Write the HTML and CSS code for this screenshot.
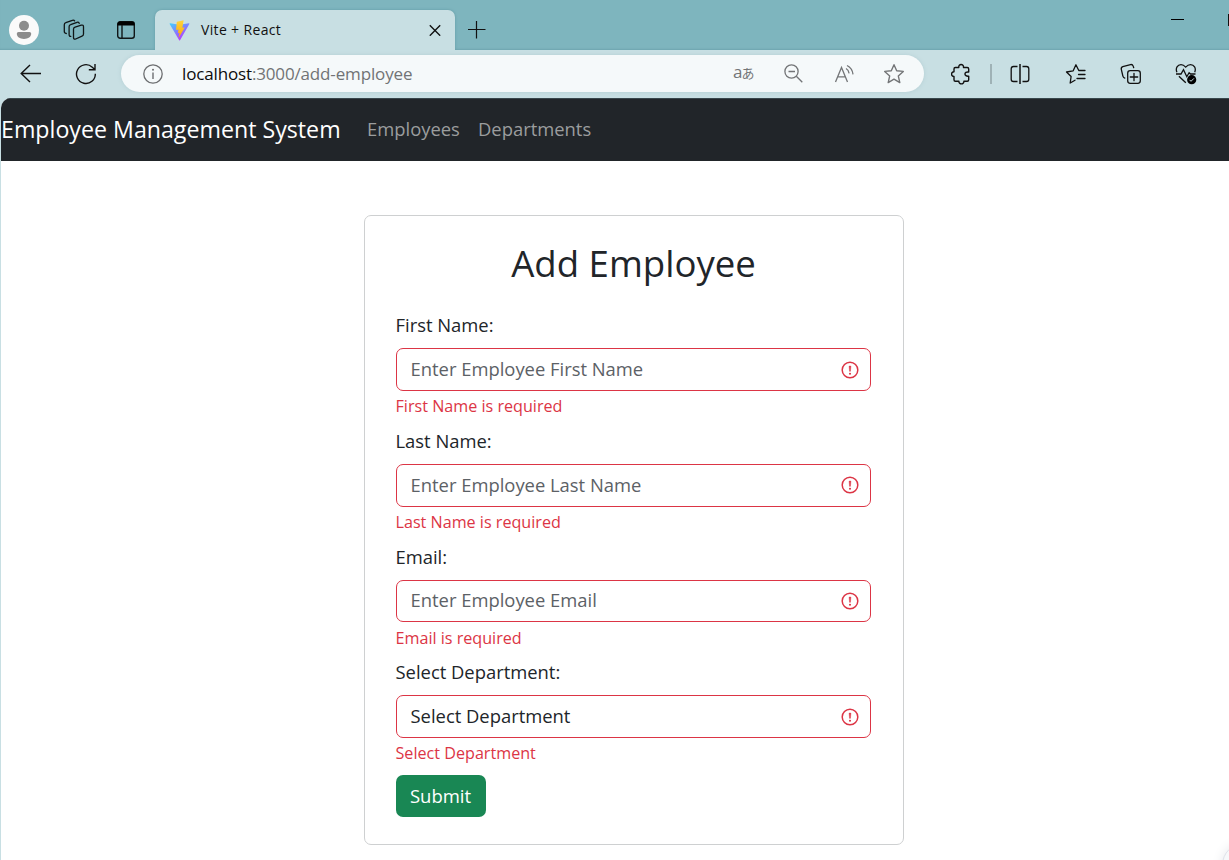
FILE: index.html
```html
<!DOCTYPE html>
<html lang="en">
<head>
<meta charset="utf-8">
<title>Vite + React</title>
<link rel="stylesheet" href="styles.css">
</head>
<body>
<div class="tabs">
  <div class="avatar"><svg width="30" height="30" viewBox="0 0 30 30"><circle cx="15" cy="15" r="15" fill="#fafafa"/><circle cx="15" cy="10.800" r="5" fill="#8c8c8c"/><path d="M9.500 17h11q1.700 0 1.700 1.600c0 3.500-3 5.400-7.200 5.400s-7.200-1.900-7.200-5.400q0-1.600 1.700-1.600z" fill="#8c8c8c"/></svg></div>
  <svg class="workspaces" width="24" height="24" viewBox="0 0 24 24"><g fill="none" stroke="#101617" stroke-width="1.300" stroke-linejoin="round" stroke-linecap="round"><path d="M10.500 11q.2-1.500 1.600-1.900l6.200-1.900q2.200-.5 2.200 1.500v7.300q0 1.500-1.500 2.100l-6.300 2.900q-2.200.7-2.200-1.500z"/><path d="M7.800 18.300q-1.700.2-1.700-1.700V8.700q0-1.500 1.500-2l6.400-2.400q1.500-.4 2.200 1"/><path d="M3.300 15.500q-2-.1-2-1.900V6.700q0-1.500 1.500-2l6.600-2.400q1.600-.4 2.200.6"/></g></svg>
  <svg class="tabmenu" width="20" height="20" viewBox="0 0 20 20"><rect x="1.700" y="1.700" width="16.600" height="16.600" rx="2.500" fill="none" stroke="#101617" stroke-width="1.400"/><path d="M1.500 5.500V4q0-2.500 2.500-2.500h12q2.500 0 2.500 2.500v1.500z" fill="#000"/><path d="M6 5v13" stroke="#101617" stroke-width="1.400"/></svg>
  <div class="tab">
    <svg width="21" height="21" viewBox="0 0 32 32"><defs><linearGradient id="va" x1="0" y1="0" x2=".6" y2="1"><stop offset="0" stop-color="#41d1ff"/><stop offset="1" stop-color="#bd34fe"/></linearGradient><linearGradient id="vb" x1="0" y1="0" x2="0" y2="1"><stop offset="0" stop-color="#ffd33d"/><stop offset="1" stop-color="#ffa800"/></linearGradient></defs><path d="M31 6.100 16.800 30.800a.8.800 0 0 1-1.300 0L1 6.100a.8.800 0 0 1 .8-1.200L16 7.400l14.200-2.500A.8.800 0 0 1 31 6.100z" fill="url(#va)"/><path d="m22.300.5-10.200 2a.4.400 0 0 0-.3.400l-1 12.300 3.700-.8-.9 5.500 2.600-.6-1.800 8.200 9.700-16.200-3.700.6z" fill="url(#vb)"/></svg>
    <span class="tab-title">Vite + React</span>
    <svg width="12" height="12" viewBox="0 0 12 12"><path d="m.8 1.300 10.400 10.400M11.200 1.300.8 11.700" stroke="#111" stroke-width="1.400"/></svg>
  </div>
  <svg class="newtab" width="18" height="18" viewBox="0 0 18 18"><path d="M0 8.500h17.500M8.500 0v17.500" stroke="#111" stroke-width="1.200"/></svg>
  <div class="minimize"></div>
  <div class="maximize"></div>
</div>
<div class="toolbar">
  <svg class="back" width="22" height="20" viewBox="0 0 22 20"><path d="M21 9.500H1.500M10 1 1.200 9.500 10 18" fill="none" stroke="#111" stroke-width="1.400"/></svg>
  <svg class="reload" width="22" height="22" viewBox="0 0 22 22"><path d="M20.300 10.700A9.400 9.400 0 1 1 17.300 4.200l2.200 2M20 1v5.700h-6.200" fill="none" stroke="#111" stroke-width="1.400"/></svg>
  <div class="address">
    <svg class="info" width="20" height="20" viewBox="0 0 20 20"><circle cx="10" cy="10" r="9.200" fill="none" stroke="#6c6e70" stroke-width="1.300"/><path d="M10 8.500v6.500" stroke="#6c6e70" stroke-width="1.400"/><circle cx="10" cy="5.800" r="1" fill="#6c6e70"/></svg>
    <div class="url"><span class="host">localhost</span>:3000/add-employee</div>
    <span class="translate">a<span class="kana">あ</span></span>
    <svg class="zoomout" width="20" height="20" viewBox="0 0 20 20" fill="none" stroke="#737577" stroke-width="1.300"><circle cx="7.500" cy="7.500" r="6.600"/><path d="M4.500 7.500h6.500M12.300 12.300l6 6"/></svg>
    <svg class="read" width="22" height="20" viewBox="0 0 22 20" fill="none" stroke="#737577" stroke-width="1.300"><path d="m1.500 18 6-14.500L13.500 18M3.800 12.800h7.400M12 4.500q2.700 1.400 3.100 4.800M13 1.500q5.200 2.500 6 8.800"/></svg>
    <svg class="star" width="22" height="22" viewBox="0 0 22 22" fill="none" stroke="#737577" stroke-width="1.400" stroke-linejoin="round"><path d="m11 1.700 2.700 6 6.600.7-5 4.500 1.500 6.700-5.800-3.400-5.800 3.400 1.500-6.700-5-4.500 6.600-.7z"/></svg>
  </div>
  <svg class="puzzle" width="20" height="22" viewBox="0 0 20 22" fill="none" stroke="#111" stroke-width="1.400" stroke-linejoin="round"><path d="M4.300 4.500h3.500C7.200.5 13 .5 12.500 4.500h3.700q1.500 0 1.500 1.500v3c-5-.7-5 4.800 0 4.200v3.500q0 1.500-1.500 1.500h-3.300c.2 3.500-5.200 3.500-5 0H4.300q-1.300 0-1.300-1.500v-3.300C-.2 13.500-.2 8.700 3 8.800V6q0-1.500 1.300-1.500z"/></svg>
  <div class="divider"></div>
  <svg class="split" width="20" height="20" viewBox="0 0 20 20" fill="none" stroke="#111" stroke-width="1.300"><path d="M7.500 2.500h-4q-2.300 0-2.300 2.300v10.400q0 2.300 2.300 2.300h4M12.500 2.500h4q2.300 0 2.300 2.300v10.400q0 2.300-2.300 2.300h-4"/><path d="M10 0v20" stroke-width="1.500"/></svg>
  <svg class="favorites" width="22" height="22" viewBox="0 0 22 22" fill="none" stroke="#111" stroke-width="1.300" stroke-linejoin="round" stroke-linecap="round"><path d="M20 7.500h-6.200l-2.900-5.700-2.700 6L1.500 9l4.600 4.500-.9 6.500 4.800-2.800M13.500 11.500H20M12 15.500h8"/></svg>
  <svg class="collections" width="22" height="22" viewBox="0 0 22 22" fill="none" stroke="#111" stroke-width="1.300" stroke-linecap="round"><path d="M4.800 15.200q-1.500-.4-1.900-2L1.300 6.300q-.4-2 1.500-2.700L10.500 1.600q2-.4 2.700 1.500l.5 1.600"/><rect x="7.700" y="7.700" width="12.600" height="12.600" rx="2.500"/><path d="M14 10.300v7.400M10.300 14h7.400"/></svg>
  <svg class="essentials" width="22" height="22" viewBox="0 0 22 22" fill="none" stroke="#111" stroke-width="1.300"><path d="M1.900 9.300C.2 5 2.600 1.700 6 1.700q2.500 0 4.700 2.400Q13 1.700 15.500 1.700c3.600 0 5.900 3.400 4.200 7.600M1 11h5l2.500-4.300 3.300 7 2.300-4 1.400 1.300h5M3.900 13.200l6.900 6.500"/><circle cx="16.700" cy="16.700" r="4.600" fill="#000" stroke="none"/><path d="m14.600 16.900 1.400 1.400 2.900-2.900" stroke="#c8dfe3" stroke-width="1"/></svg>
</div>
<div class="page">
  <nav class="navbar"><span class="brand">Employee Management System</span><span class="nav-link employees">Employees</span><span class="nav-link departments">Departments</span></nav>
  <main>
    <form class="card">
      <h2>Add Employee</h2>
      <div class="field"><label>First Name:</label><div class="control"><span>Enter Employee First Name</span><svg width="18" height="18" viewBox="0 0 12 12"><circle cx="6" cy="6" r="5.200" fill="none" stroke="#dc3545" stroke-width="1"/><path d="M5.400 3.400h1.200L6.300 6.900h-.6z" fill="#dc3545" stroke="#dc3545" stroke-width=".3"/><circle cx="6" cy="8.500" r=".7" fill="#dc3545"/></svg></div><p>First Name is required</p></div>
      <div class="field"><label>Last Name:</label><div class="control"><span>Enter Employee Last Name</span><svg width="18" height="18" viewBox="0 0 12 12"><circle cx="6" cy="6" r="5.200" fill="none" stroke="#dc3545" stroke-width="1"/><path d="M5.400 3.400h1.200L6.300 6.900h-.6z" fill="#dc3545" stroke="#dc3545" stroke-width=".3"/><circle cx="6" cy="8.500" r=".7" fill="#dc3545"/></svg></div><p>Last Name is required</p></div>
      <div class="field"><label>Email:</label><div class="control"><span>Enter Employee Email</span><svg width="18" height="18" viewBox="0 0 12 12"><circle cx="6" cy="6" r="5.200" fill="none" stroke="#dc3545" stroke-width="1"/><path d="M5.400 3.400h1.200L6.300 6.900h-.6z" fill="#dc3545" stroke="#dc3545" stroke-width=".3"/><circle cx="6" cy="8.500" r=".7" fill="#dc3545"/></svg></div><p>Email is required</p></div>
      <div class="field"><label>Select Department:</label><div class="control chosen"><span>Select Department</span><svg width="18" height="18" viewBox="0 0 12 12"><circle cx="6" cy="6" r="5.200" fill="none" stroke="#dc3545" stroke-width="1"/><path d="M5.400 3.400h1.200L6.300 6.900h-.6z" fill="#dc3545" stroke="#dc3545" stroke-width=".3"/><circle cx="6" cy="8.500" r=".7" fill="#dc3545"/></svg></div><p>Select Department</p></div>
      <button type="button" class="submit">Submit</button>
    </form>
  </main>
  <div class="fab"></div>
</div>
</body>
</html>
```
FILE: styles.css
```css
* { box-sizing: border-box; }
body { margin: 0; width: 1229px; height: 860px; overflow: hidden; background: #c8dfe3; color: #212529; font-family: "Open Sans", "Noto Sans CJK JP", sans-serif; white-space: nowrap; }
svg { display: block; flex: none; }

.tabs { display: flex; height: 50px; background: #7eb5be; box-shadow: inset 0 -2px 2px -1px #6fa5af; }
.avatar { margin: 15px 0 0 9px; }
.workspaces { margin: 18px 0 0 24px; }
.tabmenu { margin: 20px 0 0 29px; }
.tab { display: flex; align-items: center; width: 300px; height: 40px; margin: 10px 0 0 19px; padding: 0 14px; border-radius: 7px 7px 0 0; background: #c8dfe3; box-shadow: 0 0 3px #6299a4; clip-path: inset(-3px -3px 0 -3px); }
.tab-title { margin-left: 11px; flex: 1; padding-bottom: 2px; font-size: 14px; letter-spacing: .35px; color: #111; }
.newtab { margin: 21px 0 0 13px; }
.minimize { width: 13px; height: 1px; margin: 19px 0 0 685px; background: #000; }
.maximize { width: 1px; height: 12px; margin: 14px 0 0 auto; background: #111; }

.toolbar { display: flex; align-items: center; height: 48px; }
.back { margin-left: 20px; }
.reload { margin-left: 33px; }
.address { display: flex; align-items: center; width: 803px; height: 37px; margin: 0 0 1px 24px; padding-left: 22px; border-radius: 19px; background: #f5f9fa; box-shadow: 0 0 4px #b4cfd4; }
.url { width: 550px; margin-left: 19px; font-size: 17px; color: #717375; letter-spacing: -.15px; }
.host { color: #0c0c0c; }
.translate { width: 24px; margin-left: 1px; color: #737577; font-size: 17px; line-height: 20px; padding-bottom: 2px; }
.kana { font-size: 13px; margin-left: -1px; }
.zoomout { margin-left: 27px; }
.read { margin-left: 30px; }
.star { margin-left: 27px; }
.puzzle { margin-left: 27px; }
.divider { width: 2px; height: 20px; margin-left: 19px; background: #9fb2b6; }
.split { margin-left: 18px; }
.favorites { margin-left: 35px; }
.collections { margin-left: 33px; }
.essentials { margin-left: 33px; }

.page { position: relative; height: 762px; margin-left: 1px; overflow: hidden; background: #fff; border-radius: 10px 0 0 0; }
.navbar { display: flex; align-items: center; height: 63px; padding-bottom: 2px; background: #212529; border-top: 1px solid #38474c; color: #fff; }
.brand { width: 366px; font-size: 23.200px; }
.nav-link { padding-bottom: 2px; color: #9b9d9e; font-size: 18.400px; }
.employees { width: 111px; }
main { display: flex; justify-content: center; padding-top: 54px; }
.card { width: 540px; height: 630px; margin-left: 37px; padding: 23px 32px 0 31px; border: 1px solid #ced0d1; border-radius: 7px; }
h2 { margin: 0 0 24.200px; padding-left: 1px; height: 49px; line-height: 49px; text-align: center; font-size: 36.600px; font-weight: 400; }
.field { height: 115.700px; }
.field label { display: block; height: 36px; line-height: 25px; font-size: 18.400px; }
.control { display: flex; align-items: center; justify-content: space-between; height: 42.700px; padding: 0 11px 0 14px; border: 1px solid #dc3545; border-radius: 7px; color: #5c6166; font-size: 18.400px; }
.control span { padding-bottom: 2px; }
.chosen { color: #212529; }
.field p { margin: 3.300px 0 0; line-height: 24px; font-size: 16.150px; color: #dc3545; }
.submit { display: block; width: 90px; height: 42px; padding: 0; border: 0; border-radius: 7px; background: #198754; color: #fff; font: 18.500px "Open Sans", sans-serif; }
.fab { position: absolute; left: 1221px; top: 745px; width: 44px; height: 44px; border-radius: 50%; background: #f7f8fa; border: 1px solid #dfe2ea; box-shadow: 0 0 12px #e7e8ec; }
```
